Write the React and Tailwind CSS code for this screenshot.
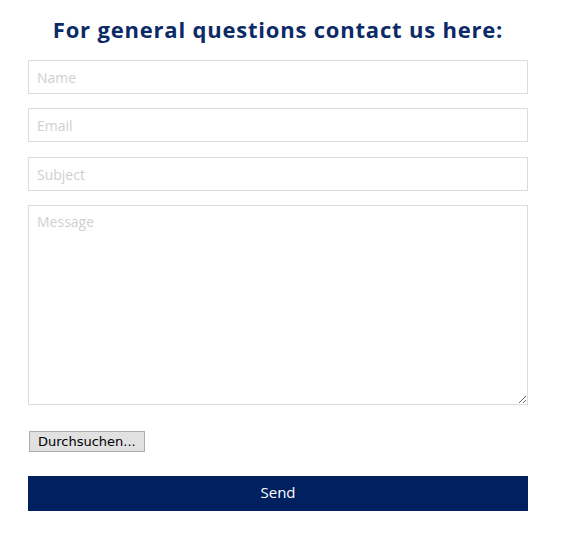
import React from 'react';

const fieldClass =
  'block w-full h-[34px] border border-[#dcdcdc] bg-white px-[8px] text-[14px] text-[#333] placeholder:text-[#cfcfcf] outline-none';

export default function App() {
  return (
    <div className="min-h-[557px] w-[586px] bg-white" style={{ fontFamily: '"Open Sans", "Noto Sans", sans-serif' }}>
      <div className="w-[500px] ml-[28px] pt-[14px]">
        <h2 className="text-center text-[22px] font-bold leading-[30px] text-[#0b2a66] tracking-[0.8px]">
          For general questions contact us here:
        </h2>

        <form className="mt-[16px] flex flex-col" onSubmit={(e) => e.preventDefault()}>
          <input type="text" placeholder="Name" className={fieldClass} />
          <input type="email" placeholder="Email" className={`${fieldClass} mt-[14px]`} />
          <input type="text" placeholder="Subject" className={`${fieldClass} mt-[15px]`} />
          <textarea
            placeholder="Message"
            className="mt-[14px] block w-full h-[200px] border border-[#dcdcdc] bg-white px-[8px] py-[5px] text-[14px] text-[#333] placeholder:text-[#cfcfcf] outline-none resize-y"
          />

          <div className="mt-[23px] pl-[1px]">
            <button
              type="button"
              className="h-[21px] px-[8px] border border-[#adadad] bg-[#e1e1e1] leading-[19px] text-black"
              style={{ fontFamily: '"DejaVu Sans", sans-serif', fontSize: '13px' }}
            >
              Durchsuchen...
            </button>
          </div>

          <button
            type="submit"
            className="mt-[24px] h-[35px] w-full pb-[2px] bg-[#002060] text-[15px] font-medium text-white"
          >
            Send
          </button>
        </form>
      </div>
    </div>
  );
}
